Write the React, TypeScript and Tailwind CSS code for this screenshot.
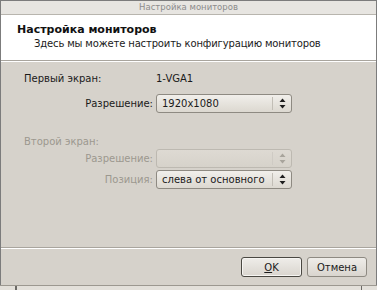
import React from "react";

const font = { fontFamily: '"DejaVu Sans", "Liberation Sans", sans-serif' };

const Arrows = ({ disabled }: { disabled?: boolean }) => (
  <svg width="7" height="11" viewBox="0 0 7 11" className={disabled ? "text-[#a8a49c]" : "text-[#1e1e1e]"}>
    <path d="M3.5 0.5 L6.5 4 L0.5 4 Z" fill="currentColor" />
    <path d="M3.5 10.5 L6.5 7 L0.5 7 Z" fill="currentColor" />
  </svg>
);

const Combo = ({ value, disabled }: { value?: string; disabled?: boolean }) => (
  <div
    className={`flex h-[19px] w-[136px] items-center rounded-[3px] border ${
      disabled
        ? "border-[#bdb9b1] bg-gradient-to-b from-[#dedad3] to-[#d6d2ca]"
        : "border-[#8e8a82] bg-gradient-to-b from-[#f1efeb] to-[#dcd8d0]"
    }`}
  >
    <span className="flex-1 pl-[5px] text-[10px] leading-none text-[#1a1a1a]">{value}</span>
    <div className={`h-[13px] w-px ${disabled ? "bg-[#cfcbc4]" : "bg-[#c2beb6]"}`} />
    <div className="flex w-[18px] justify-center">
      <Arrows disabled={disabled} />
    </div>
  </div>
);

const Label = ({ children, disabled }: { children: React.ReactNode; disabled?: boolean }) => (
  <div className={`w-[132px] pr-[3px] text-right text-[10px] ${disabled ? "text-[#9c988f]" : "text-[#1a1a1a]"}`}>
    {children}
  </div>
);

export default function App() {
  return (
    <div style={font} className="flex h-[290px] w-[377px] flex-col overflow-hidden bg-[#d6d2cb]">
      <div className="flex flex-1 flex-col border-x border-t border-[#7c7c7c]">
        {/* title bar */}
        <div className="flex h-[14px] items-center justify-center border-b border-[#b8b5ae] bg-[#e7e5e1] text-[8.5px] text-[#8c8c8c]">
          Настройка мониторов
        </div>

        {/* header */}
        <div className="flex h-[46px] flex-col border-b border-[#a9a59e] bg-white pl-[16px] pt-[8px]">
          <div className="text-[11px] font-bold leading-[14px] text-[#111]">Настройка мониторов</div>
          <div className="pl-[17px] text-[10px] leading-[14px] tracking-[-0.15px] text-[#1a1a1a]">
            Здесь мы можете настроить конфигурацию мониторов
          </div>
        </div>

        {/* body */}
        <div className="flex flex-1 flex-col border-t border-white px-[23px] pt-[10px]">
          <div className="flex h-[12px] items-center text-[10px] text-[#1a1a1a]">
            <div className="w-[132px]">Первый экран:</div>
            <div>1-VGA1</div>
          </div>
          <div className="mt-[10px] flex items-center">
            <Label>Разрешение:</Label>
            <Combo value="1920x1080" />
          </div>

          <div className="mt-[22px] flex h-[12px] items-center text-[10px] text-[#9c988f]">Второй экран:</div>
          <div className="mt-[2px] flex items-center">
            <Label disabled>Разрешение:</Label>
            <Combo disabled />
          </div>
          <div className="mt-[2px] flex items-center">
            <Label disabled>Позиция:</Label>
            <Combo value="слева от основного" />
          </div>
        </div>

        {/* footer */}
        <div className="flex h-[38px] justify-end gap-[5px] border-t border-[#a9a59e] pr-[9px] pt-[9px] shadow-[inset_0_1px_0_#fff]">
          <button className="flex h-[20px] w-[61px] items-center justify-center rounded-[3px] border border-[#4a4842] bg-gradient-to-b from-[#efede9] to-[#d9d5ce] text-[10px] text-[#1a1a1a] shadow-[inset_0_0_0_1px_#f6f5f2]">
            <span className="underline underline-offset-1">O</span>K
          </button>
          <button className="flex h-[20px] w-[60px] items-center justify-center rounded-[3px] border border-[#8e8a82] bg-gradient-to-b from-[#efede9] to-[#d9d5ce] text-[10px] text-[#1a1a1a]">
            Отмена
          </button>
        </div>
      </div>

      {/* bottom frame */}
      <div className="flex h-[5px] border-t border-[#9c9890] bg-[#e3e0da]">
        <div className="ml-[15px] h-full w-[2px] bg-[#6c6a66]" />
        <div className="flex-1" />
        <div className="mr-[15px] h-full w-px bg-[#6c6a66]" />
      </div>
    </div>
  );
}
